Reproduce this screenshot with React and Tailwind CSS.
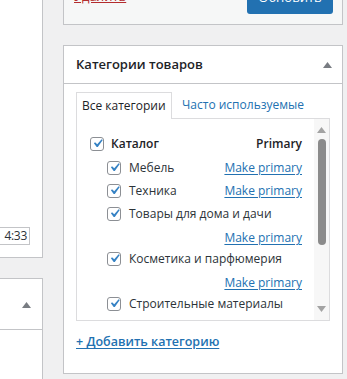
import React from "react";

function Box() {
  return (
    <span className="w-[14px] h-[14px] shrink-0 rounded-[3px] border border-[#8c8f94] bg-white flex items-center justify-center overflow-visible">
      <svg viewBox="0 0 20 20" className="w-[17px] h-[17px] shrink-0">
        <path d="M14.83 4.89l1.34.94-5.81 8.38H9.02L5.78 9.67l1.34-1.25 2.57 2.4z" fill="#3582c4" />
      </svg>
    </span>
  );
}

function Caret() {
  return (
    <svg width="9" height="6" viewBox="0 0 9 6">
      <path d="M4.5 0L9 6H0z" fill="#787c82" />
    </svg>
  );
}

function MakePrimary() {
  return <a className="text-[#2271b1] underline underline-offset-[2px] cursor-pointer">Make primary</a>;
}

function Row({ label, h = "h-[23px]", right = true }) {
  return (
    <div className={`flex items-center pl-[17px] ${h}`}>
      <Box />
      <span className="ml-[8px] whitespace-nowrap">{label}</span>
      {right && <span className="ml-auto"><MakePrimary /></span>}
    </div>
  );
}

function Wrapped({ label }) {
  return (
    <div>
      <Row label={label} right={false} />
      <div className="h-[22px] pt-[4px] flex items-center justify-end">
        <MakePrimary />
      </div>
    </div>
  );
}

export default function App() {
  return (
    <div className="flex w-[347px] h-[379px] overflow-hidden bg-[#f0f0f1] text-[12px] text-[#2c3338] font-['Open_Sans',sans-serif]">
      {/* left column */}
      <div className="w-[43px] shrink-0 flex flex-col">
        <div className="h-[258px] bg-white border-r border-b border-[#c3c4c7] flex flex-col justify-end pb-[12px]">
          <div className="w-[30px] h-[18px] border-y border-r border-[#c3c4c7] bg-white flex items-center justify-end pr-[2px] overflow-hidden text-[12px] text-[#2c3338] tracking-[-0.3px]">
            4:33
          </div>
        </div>
        <div className="mt-[20px] flex-1 bg-white border-t border-r border-[#c3c4c7]">
          <div className="h-[51px] border-b border-[#c3c4c7] flex items-center justify-end pr-[11px] pt-[2px]">
            <Caret />
          </div>
        </div>
      </div>

      {/* right column */}
      <div className="ml-[20px] w-[280px] shrink-0 flex flex-col">
        <div className="h-[25px] shrink-0 bg-[#f6f7f7] border-x border-b border-[#c3c4c7] flex items-end justify-between pl-[10px] pr-[9px] pb-[10px]">
          <a className="text-[#b32d2e] underline text-[13px] leading-[18px] mb-[9px]">Удалить</a>
          <button className="w-[86px] h-[32px] rounded-[3px] bg-[#2271b1] text-white text-[13px]">Обновить</button>
        </div>

        <div className="mt-[20px] h-[329px] shrink-0 bg-white border border-[#c3c4c7] flex flex-col">
          <div className="h-[38px] shrink-0 border-b border-[#c3c4c7] flex items-center justify-between pl-[12px] pr-[10px]">
            <h2 className="text-[13px] font-semibold text-[#1d2327]">Категории товаров</h2>
            <Caret />
          </div>

          <div className="px-[12px] pt-[8px]">
            <div className="flex items-end">
              <div className="relative z-10 w-[96px] h-[27px] mb-[-1px] bg-white border-t border-x border-[#dcdcde] flex items-center pl-[5px] text-[#1d2327]">
                Все категории
              </div>
              <div className="h-[26px] flex items-center pl-[10px] text-[#2271b1]">Часто используемые</div>
            </div>

            <div className="h-[203px] border border-[#dcdcde] flex overflow-hidden">
              <div className="flex-1 pl-[13px] pr-[12px] pt-[12px] overflow-hidden">
                <div className="h-[25px] flex items-center">
                  <Box />
                  <span className="ml-[7px] font-semibold text-[#1d2327]">Каталог</span>
                  <span className="ml-auto font-semibold text-[#1d2327]">Primary</span>
                </div>
                <Row label="Мебель" />
                <Row label="Техника" />
                <Wrapped label="Товары для дома и дачи" />
                <Wrapped label="Косметика и парфюмерия" />
                <Row label="Строительные материалы" right={false} />
              </div>
              <div className="w-[15px] shrink-0 bg-[#f7f7f7] flex flex-col items-center">
                <div className="h-[14px] flex items-end">
                  <svg width="9" height="6" viewBox="0 0 9 6"><path d="M4.5 0L9 6H0z" fill="#a3a3a3" /></svg>
                </div>
                <div className="mt-[6px] w-[8px] h-[106px] rounded-full bg-[#8b8b8b]" />
                <div className="flex-1" />
                <div className="h-[14px] flex items-start">
                  <svg width="9" height="6" viewBox="0 0 9 6"><path d="M0 0h9L4.5 6z" fill="#a3a3a3" /></svg>
                </div>
              </div>
            </div>

            <div className="mt-[12px]">
              <a className="text-[#2271b1] underline underline-offset-[2px] font-semibold text-[12.5px] cursor-pointer">+ Добавить категорию</a>
            </div>
          </div>
        </div>
      </div>
    </div>
  );
}
